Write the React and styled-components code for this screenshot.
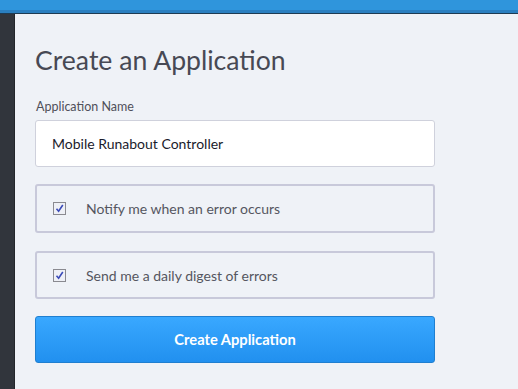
import React from 'react';
import styled, { createGlobalStyle } from 'styled-components';

const Global = createGlobalStyle`
  html, body { margin: 0; padding: 0; }
  body {
    background: #eff2f7;
    font-family: Lato, "Open Sans", sans-serif;
    width: 518px;
    height: 389px;
    overflow: hidden;
  }
`;

const TopBar = styled.div`
  height: 10px;
  background: #2f95dc;
  border-bottom: 3px solid #2a7fc0;
  box-shadow: 0 1px 0 #1d3a52;
`;

const Body = styled.div`
  display: flex;
  height: 375px;
  margin-top: 1px;
`;

const Sidebar = styled.div`
  width: 14px;
  background: #31353c;
  border-right: 1px solid #23262b;
`;

const Main = styled.div`
  flex: 1;
  padding: 30px 0 0 20px;
`;

const Form = styled.div`
  width: 400px;
  display: flex;
  flex-direction: column;
`;

const Title = styled.h1`
  margin: 0 0 24px 0;
  font-weight: 400;
  font-size: 26.6px;
  line-height: 32px;
  color: #474954;
`;

const Label = styled.label`
  font-size: 12.5px;
  color: #4f505a;
  margin: 0 0 6px 1px;
  line-height: 14px;
`;

const Input = styled.input`
  box-sizing: border-box;
  height: 47px;
  width: 400px;
  border: 1px solid #cfd1dc;
  border-radius: 3px;
  background: #fff;
  padding: 0 16px;
  font-family: inherit;
  font-size: 14px;
  color: #1a1b2c;
  outline: none;
`;

const Option = styled.label`
  box-sizing: border-box;
  display: flex;
  align-items: center;
  height: ${p => p.$h || 49}px;
  margin-top: ${p => p.$gap || 17}px;
  border: 2px solid #c8c9da;
  border-radius: 3px;
  padding: 0 0 0 16px;
  font-size: 14px;
  color: #55565f;
`;

const Box = styled.span`
  box-sizing: border-box;
  width: 13px;
  height: 13px;
  border: 1px solid #8a8a90;
  background: #eef0f6;
  display: flex;
  align-items: center;
  justify-content: center;
  margin-right: 20px;
`;

const Button = styled.button`
  box-sizing: border-box;
  margin-top: 17px;
  height: 47px;
  width: 400px;
  border: 1px solid #1f7fd0;
  border-radius: 3px;
  background: linear-gradient(#39a8ff, #2190ef);
  color: #fff;
  font-family: inherit;
  font-weight: 700;
  font-size: 14.7px;
  padding-bottom: 3px;
`;

const Check = () => (
  <Box>
    <svg width="9" height="9" viewBox="0 0 9 9">
      <path d="M1.5 4.8 L3.6 7.2 L7.8 1" stroke="#3b4bb8" strokeWidth="1.6" fill="none" />
    </svg>
  </Box>
);

export default function App() {
  return (
    <>
      <Global />
      <TopBar />
      <Body>
        <Sidebar />
        <Main>
          <Form>
            <Title>Create an Application</Title>
            <Label>Application Name</Label>
            <Input defaultValue="Mobile Runabout Controller" />
            <Option $gap={17}>
              <Check />
              Notify me when an error occurs
            </Option>
            <Option $gap={18} $h={48}>
              <Check />
              Send me a daily digest of errors
            </Option>
            <Button>Create Application</Button>
          </Form>
        </Main>
      </Body>
    </>
  );
}
